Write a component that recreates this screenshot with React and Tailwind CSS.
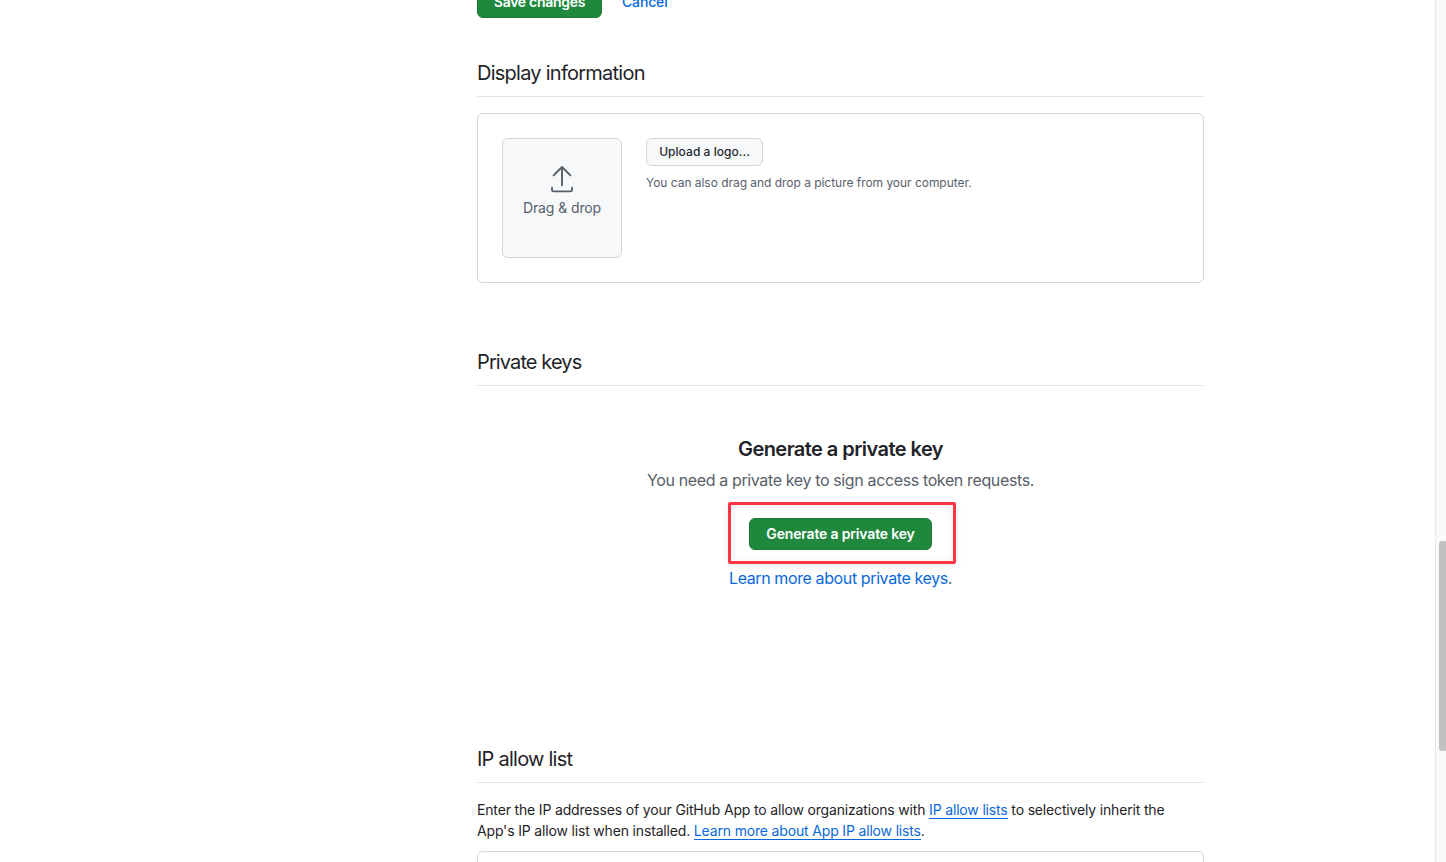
const H = ({ children, className }) => (
  <h2 className={`h-[33px] border-b border-[#dfe3e7] text-[20px] leading-[19px] text-[#1f2328] ${className}`}>{children}</h2>
);

const inlineLink = "border-b border-[#0969da] text-[#0969da]";

export default function App() {
  return (
    <div className="flex h-[862px] w-[1446px] overflow-hidden bg-white font-['Inter',sans-serif] text-sm text-[#1f2328]">
      <main className="ml-[477px] w-[727px] shrink-0">
        <div className="flex h-[18px] items-end">
          <button className="h-8 w-[125px] shrink-0 rounded-md border border-[#1f7a37] bg-[#1f883d] text-center text-sm font-semibold tracking-[-0.28px] text-white">Save changes</button>
          <a className="ml-5 h-8 leading-8 font-medium tracking-[-0.15px] text-[#0969da]">Cancel</a>
        </div>

        <H className="mt-[46px] tracking-[-0.75px]">Display information</H>
        <section className="mt-4 flex h-[170px] rounded-md border border-[#d0d7de] p-6">
          <div className="flex size-[120px] flex-col items-center rounded-md border border-[#d0d7de] bg-[#f6f8fa] pt-6 text-[#57606a]">
            <svg className="size-8" viewBox="0 0 32 32" fill="none" stroke="currentColor" strokeWidth="1.9" strokeLinecap="round" strokeLinejoin="round">
              <path d="M16 22.3V4M7.6 12.4 16 4l8.4 8.4" />
              <path d="M6 24.7v2.2q0 1.5 1.5 1.5h17q1.5 0 1.5-1.5v-2.2" />
            </svg>
            <span className="mt-0.5 leading-[21px] tracking-[-0.1px]">Drag &amp; drop</span>
          </div>
          <div className="ml-6">
            <button className="block h-7 w-[117px] rounded-md border border-[#d0d7de] bg-[#f6f8fa] text-xs font-medium tracking-[0.04px] text-[#24292f]">Upload a logo...</button>
            <p className="mt-2 text-xs leading-[18px] tracking-[-0.035px] text-[#57606a]">You can also drag and drop a picture from your computer.</p>
          </div>
        </section>

        <H className="mt-[70px] tracking-[-0.89px]">Private keys</H>
        <section className="flex h-[362px] flex-col items-center pt-12">
          <h3 className="text-[20px] leading-[30px] font-semibold tracking-[-0.55px]">Generate a private key</h3>
          <p className="mt-1 text-base leading-6 tracking-[-0.37px] text-[#57606a]">You need a private key to sign access token requests.</p>
          <div className="relative mt-[26px]">
            <button className="block h-8 w-[183px] rounded-md border border-[#1f7a37] bg-[#1f883d] text-sm font-semibold tracking-[-0.17px] text-white">Generate a private key</button>
            <div className="absolute -top-4 -left-[21px] h-[62px] w-[228px] rounded-[2px] border-[3px] border-[#fa3545] shadow-[0_2px_8px_rgba(0,0,0,0.08),inset_0_2px_8px_rgba(0,0,0,0.07)]" />
          </div>
          <p className="mt-4 text-base leading-6 tracking-[-0.39px] text-[#57606a]"><a className="text-[#0969da]">Learn more about private keys</a>.</p>
        </section>

        <H className="mt-[2px] tracking-[-0.76px]">IP allow list</H>
        <p className="mt-4 h-[42px] leading-[21px] tracking-[-0.165px]">
          Enter the IP addresses of your GitHub App to allow organizations with <a className={inlineLink}>IP allow lists</a> to selectively inherit the<br />
          App's IP allow list when installed. <a className={inlineLink}>Learn more about App IP allow lists</a>.
        </p>
        <section className="mt-[10px] h-12 rounded-md border border-[#d0d7de]" />
      </main>
      <aside className="ml-auto h-full w-[11px] border-l border-[#e8e8e8] bg-[#fafafa] pt-[541px] pl-[3px]">
        <div className="h-[210px] rounded-l-[3px] bg-[#c1c1c1]" />
      </aside>
    </div>
  );
}
